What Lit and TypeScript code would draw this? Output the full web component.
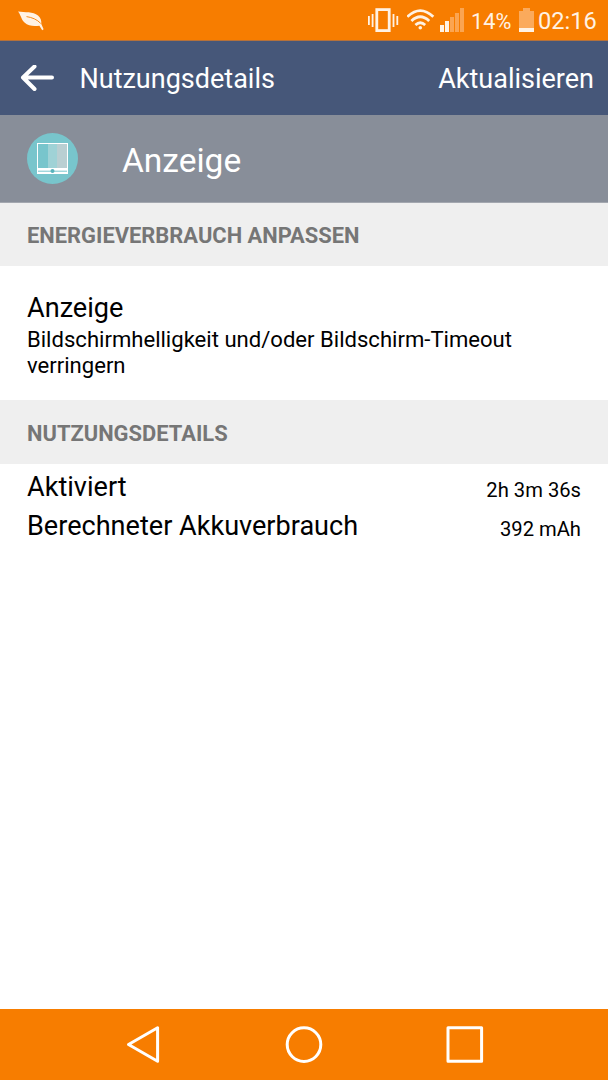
import { LitElement, html, css, svg } from "lit";
import { customElement } from "lit/decorators.js";

const signalBars = [
  { x: 0, h: 7, on: true },
  { x: 5, h: 11, on: true },
  { x: 10, h: 15, on: false },
  { x: 15, h: 19, on: false },
  { x: 20, h: 24, on: false },
];

@customElement("status-bar")
class StatusBar extends LitElement {
  static styles = css`
    :host { display: flex; align-items: flex-start; height: 41px; box-sizing: border-box; background: #f77d00; border-bottom: 1px solid #b5713a; color: #fff2e4; white-space: nowrap; }
    svg { display: block; flex: none; }
    .leaf { margin: 10px auto 0 17px; }
    .vibrate { margin: 8px 8px 0 0; }
    .wifi { margin: 8px 4px 0 0; }
    .signal { margin: 8px 7px 0 0; }
    .percent { font-size: 21.7px; line-height: 26px; width: 41px; margin: 9px 7px 0 0; }
    .battery { margin: 8px 4px 0 0; }
    .time { font-size: 23.6px; line-height: 28px; width: 58px; margin: 7px 12px 0 0; }
  `;
  render() {
    return html`
      <svg class="leaf" width="28" height="22" viewBox="0 0 28 22">
        <path fill="#fff2e4" d="M1 1.5C8 2.7 16 1.2 21 5.5C24 8 24.5 11 24.3 14.1L26.6 19.2L25.2 20.2L22.4 15.7C17 16.4 11.5 16.3 7.5 12.5C4 9.2 4 5 1 1.5Z"/>
        <path fill="none" stroke="#f77d00" stroke-width="0.9" d="M9.5 6.6C15 7.4 20 9.4 23.7 13.4"/>
      </svg>
      <svg class="vibrate" width="31" height="25" viewBox="0 0 31 25">
        <rect x="8.8" y="1.6" width="12.4" height="21" fill="none" stroke="#fff2e4" stroke-width="2.8"/>
        <path stroke="#fff2e4" stroke-width="1.8" d="M0.9 8v9M4.6 6v13M25.5 6v13M29.3 8v9"/>
      </svg>
      <svg class="wifi" width="29" height="24" viewBox="0 0 29 24">
        <g fill="none" stroke="#fff2e4" stroke-width="2.8">
          <path d="M0.3 8.8Q13.3-3.6 26.3 8.8"/>
          <path d="M4.4 13Q13.3 4.6 22.2 13"/>
          <path d="M8.4 17Q13.3 12.6 18.2 17"/>
        </g>
        <circle cx="13.3" cy="19.8" r="1.8" fill="#fff2e4"/>
      </svg>
      <svg class="signal" width="24" height="24" viewBox="0 0 24 24">
        ${signalBars.map(b => svg`<rect x=${b.x} y=${24 - b.h} width="4" height=${b.h} fill=${b.on ? "#fff2e4" : "#fba551"}/>`)}
      </svg>
      <span class="percent">14%</span>
      <svg class="battery" width="15" height="24" viewBox="0 0 15 24">
        <path fill="#fbaa5c" d="M4 0h7v3h4v17H0V3h4z"/>
        <path fill="#fff2e4" d="M0 20h15v4H0z"/>
      </svg>
      <span class="time">02:16</span>
    `;
  }
}

@customElement("nav-bar")
class NavBar extends LitElement {
  static styles = css`
    :host { display: flex; justify-content: space-between; align-items: flex-start; height: 71px; padding: 16px 124px 0 126px; box-sizing: border-box; background: #f77d00; }
    svg { display: block; }
  `;
  render() {
    return html`
      <svg width="36" height="40" viewBox="0 0 36 40"><path fill="none" stroke="#fff" stroke-width="3" stroke-linejoin="round" d="M2.5 19.5L31.6 2.7V36.3Z"/></svg>
      <svg width="40" height="40" viewBox="0 0 40 40"><circle cx="21" cy="19.6" r="16.8" fill="none" stroke="#fff" stroke-width="3"/></svg>
      <svg width="40" height="40" viewBox="0 0 40 40"><rect x="4" y="2.7" width="33.6" height="33.6" fill="none" stroke="#fff" stroke-width="3" stroke-linejoin="round"/></svg>
    `;
  }
}

@customElement("app-root")
class AppRoot extends LitElement {
  static styles = css`
    :host { display: flex; flex-direction: column; height: 1080px; width: 608px; background: #fff; color: #000; font-family: Roboto, sans-serif; overflow: hidden; white-space: nowrap; }
    status-bar, nav-bar { flex: none; }
    svg { display: block; flex: none; }
    .toolbar { display: flex; align-items: center; height: 74px; padding: 2px 14px 0 20px; box-sizing: border-box; background: #465779; color: #fff; font-size: 27px; }
    .title { margin: 0 auto 0 24.5px; }
    .hero { display: flex; align-items: center; height: 88px; padding: 0 27px; box-sizing: border-box; background: #888e99; color: #fff; border-bottom: 1px solid #a3a7af; }
    .hero-name { margin-left: 44px; font-size: 33.5px; line-height: 40px; padding-top: 5px; }
    .section { display: flex; align-items: center; height: 64px; padding: 2px 27px 0; box-sizing: border-box; background: #efefef; color: #767676; font-size: 21.9px; font-weight: 700; }
    .section.first { height: 63px; padding-top: 1px; }
    .tip { height: 134px; padding: 26px 27px 0; box-sizing: border-box; }
    .tip-title { font-size: 27.1px; line-height: 32px; }
    .tip-text { font-size: 22.08px; line-height: 26px; padding-top: 3px; }
    .row { display: flex; justify-content: space-between; align-items: flex-end; height: 39px; padding: 0 27px; font-size: 27.08px; line-height: 32px; }
    .value { font-size: 20.2px; line-height: 25px; }
    .space { flex: 1; }
  `;
  render() {
    return html`
      <status-bar></status-bar>
      <header class="toolbar">
        <svg width="35" height="28" viewBox="0 0 35 28"><path fill="none" stroke="#fff" stroke-width="4" stroke-linecap="round" stroke-linejoin="round" d="M14.5 1.5L3 12.5L14.5 24M3.5 12.5H32"/></svg>
        <span class="title">Nutzungsdetails</span>
        <span>Aktualisieren</span>
      </header>
      <div class="hero">
        <svg width="51" height="51" viewBox="0 0 51 51">
          <circle cx="25.5" cy="25.5" r="25.5" fill="#78c5cc"/>
          <path fill="#fff" d="M10 10h31v31H10z"/>
          <path fill="#78c5cc" d="M11 11h10v24H11z"/>
          <path fill="#9fd2d6" d="M21 11h9v24h-9z"/>
          <path fill="#b9cfd2" d="M30 11h10v24H30z"/>
          <path stroke="#78c5cc" d="M11 38.2h29"/>
          <circle cx="25.5" cy="38" r="2" fill="#58b3bc"/>
        </svg>
        <span class="hero-name">Anzeige</span>
      </div>
      <div class="section first">ENERGIEVERBRAUCH ANPASSEN</div>
      <div class="tip">
        <div class="tip-title">Anzeige</div>
        <div class="tip-text">Bildschirmhelligkeit und/oder Bildschirm-Timeout<br>verringern</div>
      </div>
      <div class="section">NUTZUNGSDETAILS</div>
      <div class="row"><span>Aktiviert</span><span class="value">2h 3m 36s</span></div>
      <div class="row"><span>Berechneter Akkuverbrauch</span><span class="value">392 mAh</span></div>
      <div class="space"></div>
      <nav-bar></nav-bar>
    `;
  }
}
